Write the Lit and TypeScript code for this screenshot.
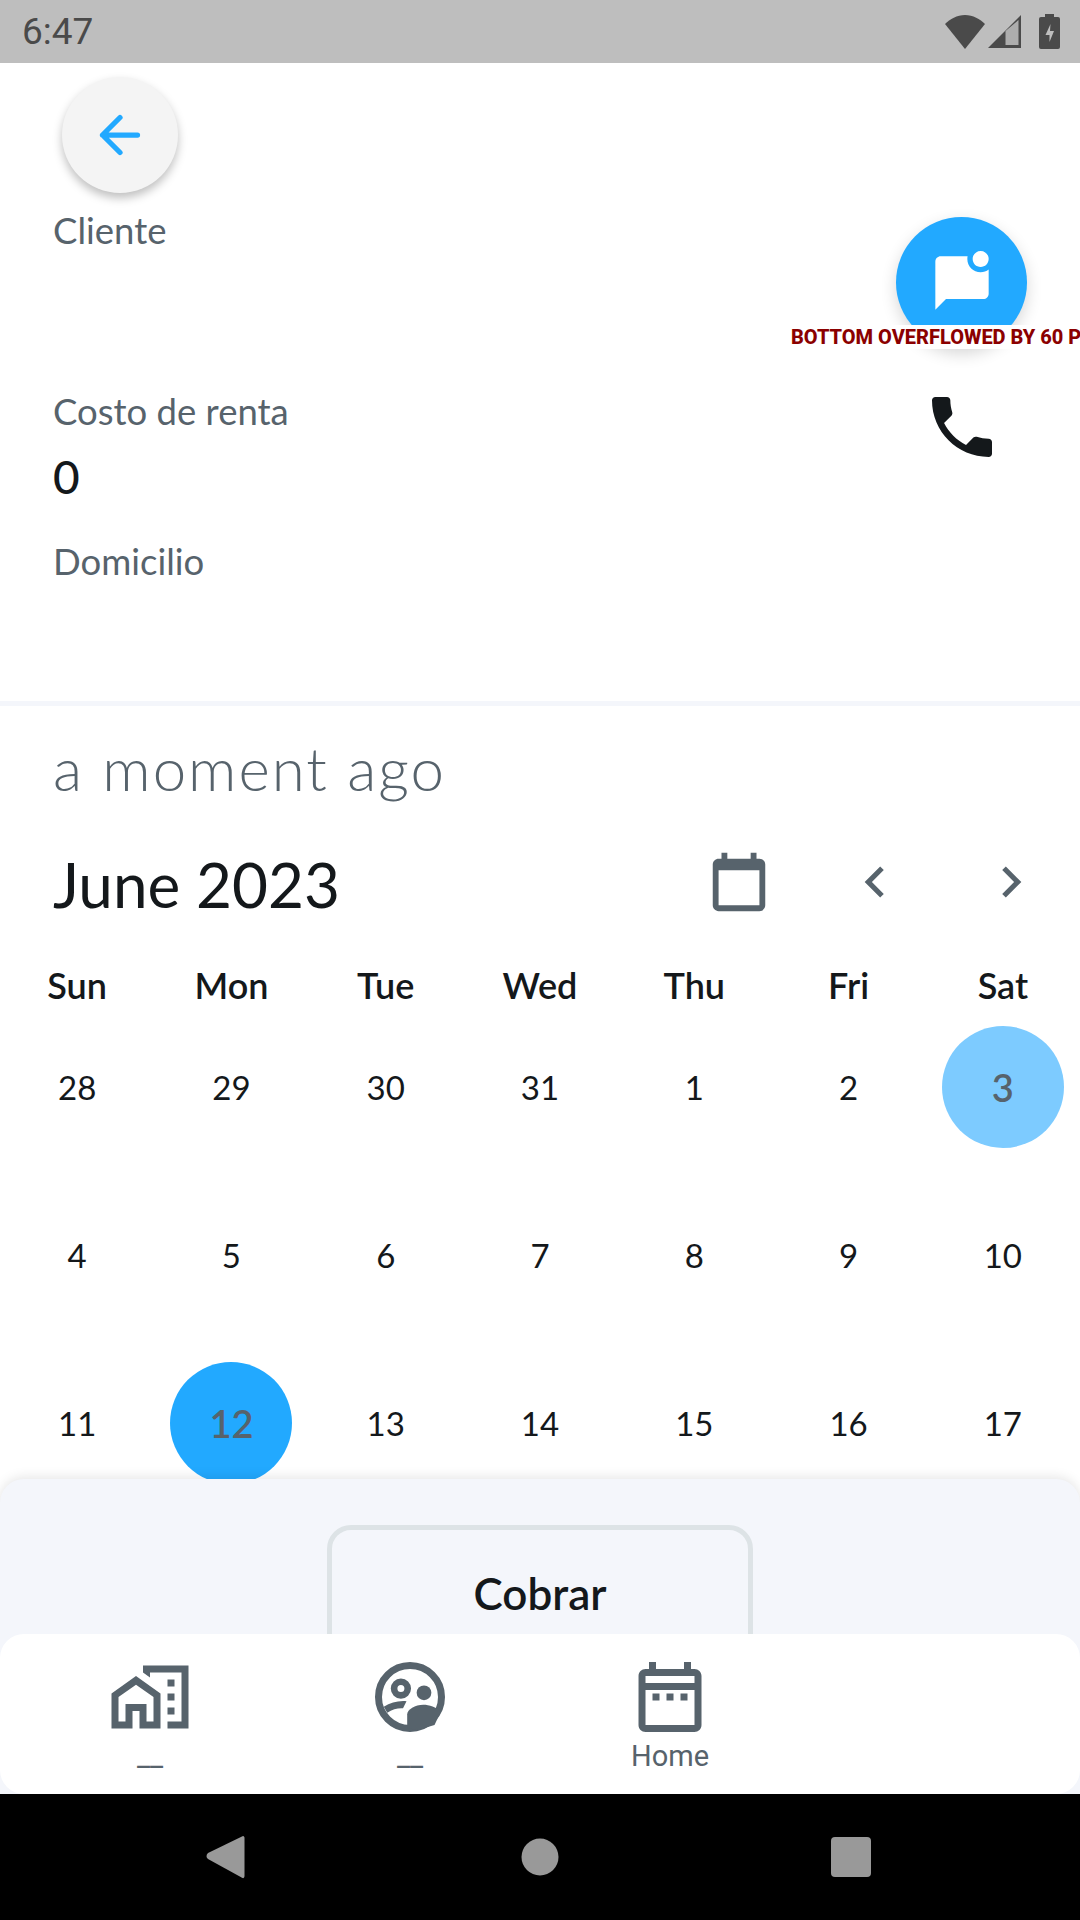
import { LitElement, css, html, svg } from "lit";
import { customElement } from "lit/decorators.js";

const WEEKDAYS = ["Sun", "Mon", "Tue", "Wed", "Thu", "Fri", "Sat"];
const DAYS = [28, 29, 30, 31, 1, 2, 3, 4, 5, 6, 7, 8, 9, 10, 11, 12, 13, 14, 15, 16, 17];

const icon = (d: string, cls: string) => html`
  <svg class=${cls} viewBox="0 0 24 24" fill="currentColor">${svg`<path d=${d}></path>`}</svg>
`;

const PHONE =
  "M6.62 10.79c1.44 2.83 3.76 5.14 6.59 6.59l2.2-2.2c.27-.27.67-.36 1.02-.24 1.12.37 2.33.57 3.57.57.55 0 1 .45 1 1V20c0 .55-.45 1-1 1-9.39 0-17-7.61-17-17 0-.55.45-1 1-1h3.5c.55 0 1 .45 1 1 0 1.25.2 2.45.57 3.57.11.35.03.74-.25 1.02l-2.2 2.2z";
const CHAT_UNREAD =
  "M22 6.98V16c0 1.1-.9 2-2 2H6l-4 4V4c0-1.1.9-2 2-2h10.1c-.06.32-.1.66-.1 1 0 2.76 2.24 5 5 5 1.13 0 2.16-.39 3-1.02zM16 3c0 1.66 1.34 3 3 3s3-1.34 3-3-1.34-3-3-3-3 1.34-3 3z";
const HOME_WORK =
  "M17 7h2v2h-2zM17 11h2v2h-2zM17 15h2v2h-2zM1 11v10h6v-5h2v5h6V11L8 6l-7 5zm12 8h-2v-5H5v5H3v-7l5-3.5 5 3.5v7zM10 3v1.97l2 1.43V5h9v14h-4v2h6V3z";
const DATE_RANGE =
  "M7 11h2v2H7v-2zm14-5v14c0 1.1-.9 2-2 2H5c-1.11 0-2-.9-2-2l.01-14c0-1.1.88-2 1.99-2h1V2h2v2h8V2h2v2h1c1.1 0 2 .9 2 2zM5 8h14V6H5v2zm14 12V10H5v10h14zm-4-7h2v-2h-2v2zm-4 0h2v-2h-2v2z";
const CALENDAR =
  "M19 4h-1V2h-2v2H8V2H6v2H5c-1.1 0-2 .9-2 2v14c0 1.1.9 2 2 2h14c1.1 0 2-.9 2-2V6c0-1.1-.9-2-2-2zm0 16H5V8h14v12z";

// supervised user circle, outlined
const usersIcon = html`
  <svg viewBox="0 0 24 24" fill="currentColor">
    <circle cx="12" cy="12" r="9" fill="none" stroke="currentColor" stroke-width="2"></circle>
    <circle cx="9.4" cy="9.6" r="1.95" fill="none" stroke="currentColor" stroke-width="1.9"></circle>
    <circle cx="16" cy="10.8" r="2.1"></circle>
    <path d="M11.2 20.8V17c0-1.500 2.300-2.800 4.600-2.800 1.700 0 3.700.6 5 2L19 20l-5 1.500z"></path>
    <path d="M4.500 14.800c2-1.200 4-1.800 6.500-1.600l-1 2c-1.500-.1-3 .3-4.500 1.300z"></path>
  </svg>
`;

@customElement("app-root")
export class AppRoot extends LitElement {
  static styles = css`
    :host {
      display: flex;
      flex-direction: column;
      position: relative;
      width: 1080px;
      height: 1920px;
      overflow: hidden;
      background: #fff;
      color: #14181b;
      font-family: "Lato", "Noto Sans", sans-serif;
    }

    .status {
      flex: none;
      height: 63px;
      display: flex;
      align-items: center;
      padding: 0 20px 0 22px;
      background: #bebebe;
      color: #4a4a4a;
      font-family: "Roboto", sans-serif;
      font-size: 37px;
    }
    .status .time {
      flex: 1;
    }
    .status svg {
      display: block;
    }
    .status .wifi {
      width: 40px;
      height: 34px;
      margin-right: 3px;
    }
    .status .signal {
      width: 33px;
      height: 33px;
      margin-right: 18px;
    }
    .status .battery {
      width: 21px;
      height: 35px;
    }

    .content {
      flex: 1;
      min-height: 0;
      overflow: hidden;
      display: flex;
      flex-direction: column;
    }
    .content > * {
      flex: none;
    }

    .client {
      height: 643px;
      display: grid;
      grid-template-columns: 1fr 131px;
      box-sizing: border-box;
      padding: 14px 53px 0 53px;
      border-bottom: 5px solid #f4f6fb;
    }
    .info {
      display: flex;
      flex-direction: column;
      align-items: flex-start;
    }
    .back {
      width: 116px;
      height: 116px;
      margin-left: 9px;
      border-radius: 50%;
      background: #f4f4f4;
      box-shadow: 0 5px 10px rgba(0, 0, 0, 0.25);
      color: #22a9ff;
      display: flex;
      align-items: center;
      justify-content: center;
    }
    .back svg {
      width: 42px;
      height: 42px;
    }
    .label {
      font-size: 36.5px;
      line-height: 44px;
      color: #57636c;
    }
    .label.cliente {
      margin-top: 15px;
    }
    .label.renta {
      margin-top: 137px;
    }
    .label.domicilio {
      margin-top: 37px;
    }
    .value {
      margin-top: 19px;
      font-size: 46px;
      line-height: 50px;
      font-weight: 500;
    }

    .actions {
      display: flex;
      flex-direction: column;
      align-items: center;
      padding-top: 140px;
    }
    .fab {
      width: 131px;
      height: 131px;
      border-radius: 50%;
      background: #22a9ff;
      color: #fff;
      display: flex;
      align-items: center;
      justify-content: center;
      box-shadow: 0 6px 16px rgba(0, 0, 0, 0.16);
    }
    .fab svg {
      width: 64px;
      height: 64px;
    }
    .phone {
      width: 80px;
      height: 80px;
      margin-top: 39px;
    }

    .overflow {
      position: absolute;
      top: 325px;
      left: 791px;
      width: 289px;
      height: 24px;
      overflow: hidden;
      white-space: nowrap;
      background: #fff;
      color: #8b0000;
      font-family: "Roboto", sans-serif;
      font-size: 20px;
      font-weight: 800;
      line-height: 24px;
    }

    .ago {
      margin: 30px 0 0 53px;
      font-size: 60px;
      line-height: 64px;
      font-weight: 300;
      letter-spacing: 2px;
      color: #57636c;
    }

    .month {
      display: flex;
      align-items: center;
      height: 80px;
      margin-top: 42px;
      padding-left: 53px;
    }
    .month .title {
      flex: 1;
      padding-top: 3px;
      font-size: 62px;
      line-height: 70px;
    }
    .month svg {
      color: #57636c;
      display: block;
      flex: none;
    }
    .month .cal {
      width: 70px;
      height: 70px;
      margin-right: 70px;
    }
    .month .chev {
      width: 62px;
      height: 62px;
    }
    .month .chev.next {
      margin-left: 74px;
      margin-right: 38px;
    }

    .grid {
      display: grid;
      grid-template-columns: repeat(7, 1fr);
      margin-top: 46px;
    }
    .weekday {
      text-align: center;
      font-size: 36px;
      font-weight: 600;
      line-height: 35px;
    }
    .day {
      height: 168px;
      display: flex;
      align-items: center;
      justify-content: center;
      font-size: 33px;
    }
    .day span {
      width: 122px;
      height: 122px;
      border-radius: 50%;
      display: flex;
      align-items: center;
      justify-content: center;
    }
    .day .today,
    .day .selected {
      color: #57636c;
      font-weight: 600;
      font-size: 38px;
    }
    .day .today {
      background: #7dcbff;
    }
    .day .selected {
      background: #22a9ff;
    }

    .sheet {
      flex: none;
      height: 315px;
      border-radius: 24px 24px 0 0;
      background: #f4f6fb;
      box-shadow: 0 -2px 12px rgba(0, 0, 0, 0.1);
      display: flex;
      flex-direction: column;
      position: relative;
    }
    .charge-wrap {
      flex: 1;
      min-height: 0;
      overflow: hidden;
      display: flex;
      justify-content: center;
      padding-top: 46px;
    }
    .charge {
      flex: none;
      width: 426px;
      height: 136px;
      box-sizing: border-box;
      border: 5px solid #dde3e6;
      border-radius: 24px;
      display: flex;
      align-items: center;
      justify-content: center;
      font-size: 44px;
      font-weight: 600;
    }
    .nav {
      flex: none;
      height: 160px;
      box-sizing: border-box;
      padding: 0 20px;
      background: #fff;
      border-radius: 24px;
      display: grid;
      grid-template-columns: repeat(4, 260px);
      color: #57636c;
    }
    .nav-item {
      display: flex;
      flex-direction: column;
      align-items: center;
      padding-top: 21px;
      font-family: "Roboto", sans-serif;
      font-size: 29px;
      line-height: 34px;
    }
    .nav-item svg {
      width: 84px;
      height: 84px;
      display: block;
    }

    .system {
      flex: none;
      height: 126px;
      background: #000;
    }
    .system svg {
      display: block;
      width: 1080px;
      height: 126px;
    }
  `;

  render() {
    return html`
      <div class="status">
        <div class="time">6:47</div>
        <svg class="wifi" viewBox="0 0 40 34"><path d="M20 34 0 9C5 4 12 0 20 0s15 4 20 9z" fill="currentColor"></path></svg>
        <svg class="signal" viewBox="0 0 33 33">
          <path d="M33 0v33H0z" fill="currentColor"></path>
          <path d="M17.500 16 30.500 5v25h-13z" fill="#bebebe" opacity=".85"></path>
        </svg>
        <svg class="battery" viewBox="0 0 21 35">
          <path d="M6 0h9v3h4a2 2 0 0 1 2 2v28a2 2 0 0 1-2 2H2a2 2 0 0 1-2-2V5a2 2 0 0 1 2-2h4z" fill="currentColor"></path>
          <path d="m11.500 10-5 11h4v7l4.500-11h-4z" fill="#bebebe"></path>
        </svg>
      </div>

      <div class="content">
        <section class="client">
          <div class="info">
            <div class="back">
              <svg viewBox="0 0 24 24" fill="none" stroke="currentColor" stroke-width="3" stroke-linecap="round" stroke-linejoin="round">
                <path d="M22 12H2M12 2 2 12l10 10"></path>
              </svg>
            </div>
            <div class="label cliente">Cliente</div>
            <div class="label renta">Costo de renta</div>
            <div class="value">0</div>
            <div class="label domicilio">Domicilio</div>
          </div>
          <div class="actions">
            <div class="fab">${icon(CHAT_UNREAD, "")}</div>
            ${icon(PHONE, "phone")}
          </div>
        </section>

        <div class="ago">a moment ago</div>

        <div class="month">
          <div class="title">June 2023</div>
          ${icon(CALENDAR, "cal")}
          <svg class="chev" viewBox="0 0 24 24" fill="currentColor"><path d="M15.400 7.400 14 6l-6 6 6 6 1.400-1.400L10.800 12z"></path></svg>
          <svg class="chev next" viewBox="0 0 24 24" fill="currentColor"><path d="M10 6 8.600 7.400 13.200 12l-4.600 4.600L10 18l6-6z"></path></svg>
        </div>

        <div class="grid">
          ${WEEKDAYS.map((d) => html`<div class="weekday">${d}</div>`)}
          ${DAYS.map(
            (d, i) => html`
              <div class="day">
                <span class=${i === 6 ? "today" : i === 15 ? "selected" : ""}>${d}</span>
              </div>
            `,
          )}
        </div>
      </div>

      <div class="sheet">
        <div class="charge-wrap">
          <div class="charge">Cobrar</div>
        </div>
        <nav class="nav">
          <div class="nav-item">${icon(HOME_WORK, "")}<div>__</div></div>
          <div class="nav-item">${usersIcon}<div>__</div></div>
          <div class="nav-item">${icon(DATE_RANGE, "")}<div>Home</div></div>
        </nav>
      </div>

      <div class="system">
        <svg viewBox="0 0 1080 126" fill="#999">
          <path d="M243 42c1 0 1.500 1 1.500 2v38c0 1.500-1 2.500-2 2L208 65c-2-1.500-2-4 0-6z"></path>
          <circle cx="540" cy="63" r="18.500"></circle>
          <rect x="831" y="43" width="40" height="40" rx="4"></rect>
        </svg>
      </div>

      <div class="overflow">BOTTOM OVERFLOWED BY 60 PIXELS</div>
    `;
  }
}
